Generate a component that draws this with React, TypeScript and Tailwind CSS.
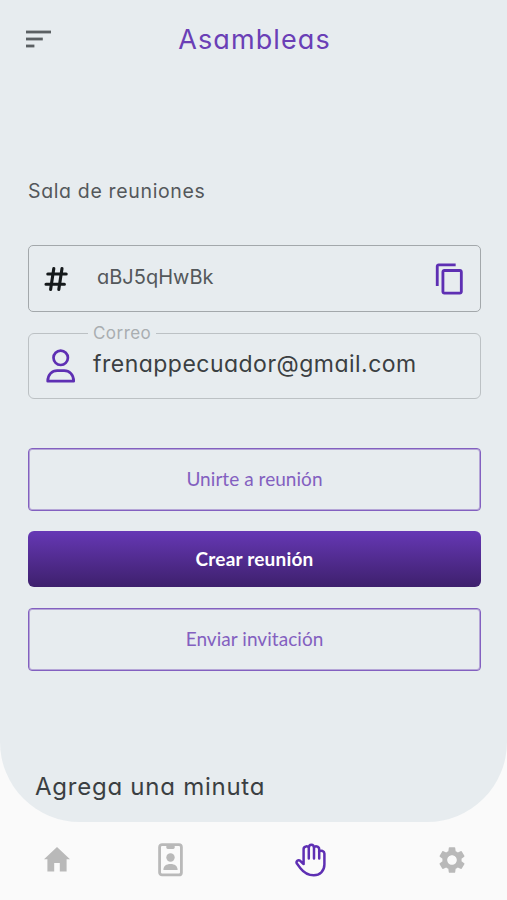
import { MdContentCopy, MdSettings } from "react-icons/md";

// single-storey "a" for the rounded headings and fields
const rounded = "font-['Inter',sans-serif] [font-feature-settings:'cv11']";

function SortIcon() {
  return (
    <svg width="25" height="18" viewBox="0 0 25 18" fill="#5b6063">
      <rect x="0" y="0.6" width="25" height="2.8" />
      <rect x="0" y="7.6" width="16.8" height="2.8" />
      <rect x="0" y="14.6" width="8.4" height="2.8" />
    </svg>
  );
}

function HashIcon() {
  return (
    <svg
      width="24"
      height="26"
      viewBox="0 0 24 26"
      fill="none"
      stroke="#15191b"
      strokeWidth="3.1"
      strokeLinecap="round"
    >
      <path d="M3.8 8H22.2M2 18.2H20.4M9.8 2.5L6.6 23.5M18 2.5L14.8 23.5" />
    </svg>
  );
}

function PersonIcon() {
  return (
    <svg
      width="30"
      height="34"
      viewBox="0 0 30 34"
      fill="none"
      stroke="#5e2fb3"
      strokeWidth="2.7"
      strokeLinejoin="round"
    >
      <circle cx="14.7" cy="8.8" r="7.2" />
      <path d="M1.7 32.2C1.7 25.5 6.2 21.6 11.2 21.6H18.2C23.2 21.6 27.7 25.5 27.7 32.2Z" />
    </svg>
  );
}

function HomeIcon() {
  return (
    <svg width="26" height="25" viewBox="0 0 26 25" fill="#b9b9b9">
      <path d="M13 0L26 12.3H22.6V24.5H15.8V16H10.2V24.5H3.4V12.3H0Z" />
    </svg>
  );
}

function BadgeIcon() {
  return (
    <svg width="25" height="34" viewBox="0 0 25 34" fill="#b9b9b9">
      <rect
        x="1.6"
        y="1.6"
        width="21.8"
        height="30.3"
        rx="2.5"
        fill="none"
        stroke="#b9b9b9"
        strokeWidth="2.8"
      />
      <path d="M8.3 2H16.7V4.6Q16.7 6 15.3 6H9.7Q8.3 6 8.3 4.6Z" />
      <circle cx="12.5" cy="14.5" r="4.2" />
      <path d="M5.4 27C5.4 23 8.2 21 12.5 21S19.6 23 19.6 27Z" />
    </svg>
  );
}

function HandIcon() {
  return (
    <svg
      width="32"
      height="34"
      viewBox="0 0 32 34"
      fill="none"
      stroke="#5e2fb3"
      strokeWidth="2.5"
      strokeLinecap="round"
      strokeLinejoin="round"
    >
      <path d="M8.6 21V6C8.6 2.8 13.6 2.6 13.8 5V15.5M13.8 5C13.8 .6 19 .6 19 5V15.5M19 5C19.6 2.4 24.2 3 24.2 6.4V15.5M24.2 8.6C26.2 7 29.4 7.8 29.4 10.6V21.5C29.4 28 24.8 32.3 18.8 32.3C12.2 32.3 8.4 29 5.4 25.2L1.9 20.6C.6 18.2 3.2 16.2 5.2 17.8L8.6 21" />
    </svg>
  );
}

export default function App() {
  return (
    <div className="flex h-[900px] w-[507px] flex-col overflow-hidden bg-[#fafafa]">
      <main className="flex h-[822px] flex-col rounded-b-[80px] bg-[#e7ecef] pr-[26px] pl-7">
        <header className="grid h-20 grid-cols-[1fr_auto_1fr] items-center">
          <button className="-mt-[2px] -ml-[2px] w-fit" aria-label="Menú">
            <SortIcon />
          </button>
          <h1
            className={`${rounded} text-[27px] leading-[78px] font-normal tracking-[1.1px] text-[#6a3fb6]`}
          >
            Asambleas
          </h1>
        </header>

        <h2
          className={`${rounded} mt-[97px] h-[28px] text-[19.5px] leading-[28px] font-normal tracking-[0.65px] text-[#54585b]`}
        >
          Sala de reuniones
        </h2>

        <div className="mt-10 flex h-[67px] shrink-0 items-center rounded-[5px] border-[1.5px] border-[#a3a8ab] pr-[13px] pl-[15px]">
          <HashIcon />
          <span
            className={`${rounded} ml-[29px] flex-1 pb-[3px] text-[20px] leading-7 font-normal text-[#54585b]`}
          >
            aBJ5qHwBk
          </span>
          <MdContentCopy size={34} color="#5e2fb3" />
        </div>

        <div className="relative mt-[21px] flex h-[66px] shrink-0 items-center rounded-[6px] border-[1.5px] border-[#bcc1c4] pl-[17px]">
          <span
            className={`${rounded} absolute -top-[13px] left-[59px] bg-[#e7ecef] px-[5px] text-[17px] leading-6 font-normal tracking-[0.45px] text-[#a9aeb1]`}
          >
            Correo
          </span>
          <PersonIcon />
          <span
            className={`${rounded} ml-[17px] pb-[4px] text-[23px] leading-8 font-normal tracking-[0.48px] text-[#3b3f42]`}
          >
            frenappecuador@gmail.com
          </span>
        </div>

        <div className="mt-[49px] flex flex-col gap-5 font-['Lato',sans-serif] text-[19px]">
          <button className="h-[63px] rounded-[4px] border-[1.5px] border-[#8360c0] tracking-[0.05px] text-[#8360c0] ring-1 ring-[#8360c0]/50 ring-inset">
            Unirte a reunión
          </button>
          <button className="mb-px h-[56px] rounded-[6px] bg-linear-to-b from-[#6638b5] to-[#3e206d] pt-px font-bold tracking-[0.2px] text-white">
            Crear reunión
          </button>
          <button className="h-[63px] rounded-[4px] border-[1.5px] border-[#8360c0] pb-px tracking-[0.05px] text-[#8360c0] ring-1 ring-[#8360c0]/50 ring-inset">
            Enviar invitación
          </button>
        </div>

        <h2
          className={`${rounded} mt-[98px] pl-[7px] text-[24px] leading-[35px] font-normal tracking-[0.75px] text-[#3b3f42]`}
        >
          Agrega una minuta
        </h2>
      </main>

      <nav className="flex h-[78px] items-center pb-[3px] pl-[44px]">
        <HomeIcon />
        <div className="ml-[88px]">
          <BadgeIcon />
        </div>
        <div className="ml-[112px]">
          <HandIcon />
        </div>
        <div className="ml-[109px]">
          <MdSettings size={32} color="#b9b9b9" />
        </div>
      </nav>
    </div>
  );
}
